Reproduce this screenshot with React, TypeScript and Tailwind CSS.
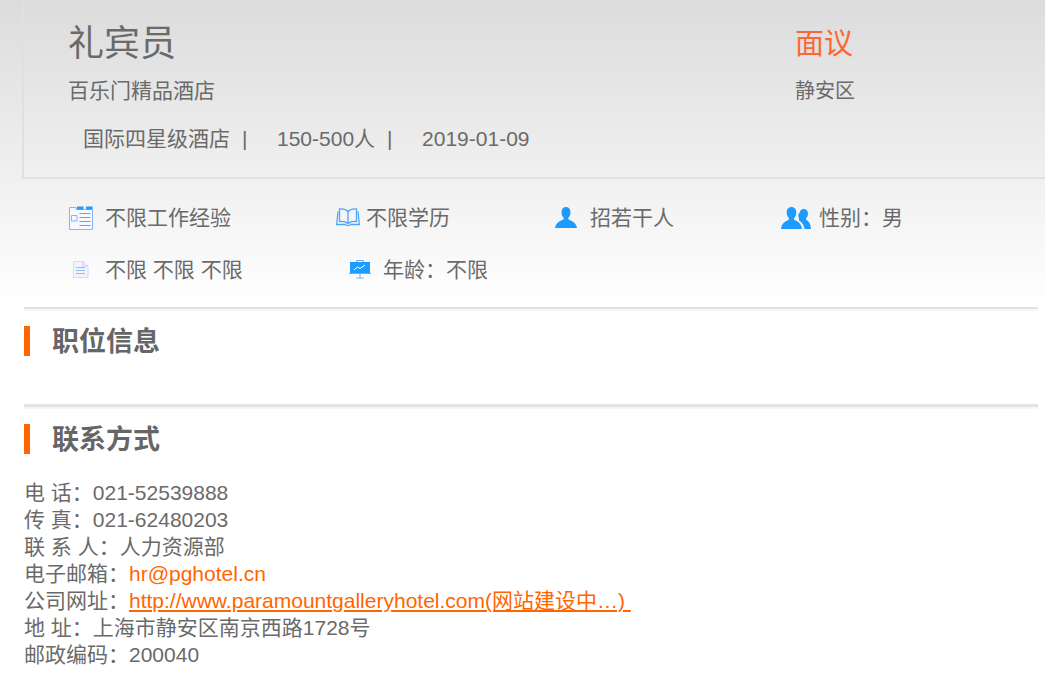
const font = "font-['Liberation_Sans','Noto_Sans_CJK_SC',sans-serif]";

const CalendarIcon = () => (
  <svg width="24" height="24" viewBox="0 0 24 24" fill="none">
    <path d="M.5 1.500H7v2h16.500v20H.5z" fill="#f6f9ff" stroke="#84b4ff" />
    <path d="M8 .5h6.500V3.500H8zM17 .5h6.500V3.500H17z" fill="#1e9bff" />
    <path d="M2.500 9.500h5.500v5.500H2.500z" stroke="#84b4ff" />
    <path d="M10.500 7.500h11M10.500 11.500h11M10.500 15.500h11M10.500 19.500h11" stroke="#5aa5f5" />
  </svg>
);

const BookIcon = () => (
  <svg width="24" height="19" viewBox="0 0 24 19" fill="none" stroke="#4ea5fb" strokeWidth="1.3">
    <path d="M12 3.500C10 1.500 7 .7 3.500 1v12.500c3.500-.3 6.500.2 8.500 2 2-1.800 5-2.300 8.500-2V1C17 .7 14 1.500 12 3.500zM12 3.500v12" />
    <path d="M2 3.500.7 16.500h8.800c.8 1.500 4.200 1.500 5 0h8.800L22 3.500" />
  </svg>
);

const PersonIcon = () => (
  <svg width="22" height="21" viewBox="0 0 22 21" fill="#1e9bff">
    <path d="M11 0c2.700 0 4.500 2.200 4.500 5.300 0 2.300-.9 4.400-2.100 5.500v1.500c.9 1 7.600 2 8.600 8.700H0c1-6.700 7.700-7.700 8.600-8.700v-1.500C7.400 9.700 6.500 7.600 6.500 5.300 6.500 2.200 8.300 0 11 0z" />
  </svg>
);

const PeopleIcon = () => (
  <svg width="30" height="22" viewBox="0 0 30 22" fill="#1e9bff">
    <path d="M18.500 6.500c0-3 2-4.500 4.300-4.500S27 3.700 27 6.500c0 2-.7 3.700-1.900 4.800v1.500c1 .8 4.400 1.800 4.900 9.200h-6.500c-.5-3.800-2.500-6.700-5.500-8.400V11.300c-.5-1-.9-3-.5-4.800z" />
    <path d="M10.500 0c2.900 0 4.800 2.300 4.800 5.500 0 2.300-1 4.500-2.200 5.600v1.500c1 1 7 2.300 7.900 9.400H0c.9-7.100 6.900-8.400 7.900-9.400v-1.500C6.700 10 5.700 7.800 5.700 5.500 5.700 2.300 7.600 0 10.500 0z" />
  </svg>
);

const DocIcon = () => (
  <svg width="16" height="17" viewBox="0 0 16 17" fill="none">
    <path d="M.5.5h9.500l5 4.500v11.500H.5z" fill="#f1f4ff" stroke="#d6dcff" />
    <path d="M10 .5V5h5" stroke="#c4d2fb" />
    <path d="M3 6.500h9M3 9.500h9M3 12.500h9" stroke="#8cc0f5" />
  </svg>
);

const BoardIcon = () => (
  <svg width="22" height="19" viewBox="0 0 22 19" fill="none">
    <path d="M7.500 2V.5h7V2" stroke="#62adf7" />
    <path d="M1 2h20v11H1z" fill="#1e9bff" />
    <path d="M0 13.500h22M11 14v3.500M7.500 18h7" stroke="#62adf7" />
    <path d="M5 10l3.500-3 2.500 1.500L16 5" stroke="#fff" />
  </svg>
);

const Meta = ({ icon, text, iconBox, width }: { icon: React.ReactNode; text: string; iconBox: string; width: string }) => (
  <div className={`flex items-center ${width}`}>
    <div className={`flex shrink-0 ${iconBox}`}>{icon}</div>
    <span>{text}</span>
  </div>
);

const SectionTitle = ({ children }: { children: string }) => (
  <div className="flex items-center h-[30px] border-l-[6px] border-[#ff6600] pl-[22px] pt-[2px] text-[27px] leading-[30px] font-bold text-[#666]">
    {children}
  </div>
);

const Divider = ({ thick }: { thick?: boolean }) => (
  <div className={`${thick ? "border-t-[3px]" : "border-t-2"} border-b-2 border-t-[#e2e2e2] border-b-[#f6f6f6]`} />
);

const App = () => {
  return (
    <div className={`${font} w-[1045px] h-[674px] overflow-hidden text-[21px] text-[#6a6a6a] bg-white`}>
      <div className="bg-gradient-to-b from-[#dcdcdc] to-white h-[307px] pl-6">
        <div className="h-[179px] border-l-2 border-b-2 border-[#e0e0e0] ml-[-2px] pl-[44px] pt-[18px]">
          <div className="flex">
            <div className="w-[727px]">
              <h1 className="text-[36px] leading-[50px] pt-px">礼宾员</h1>
              <p className="leading-[32px] mt-[6px]">百乐门精品酒店</p>
            </div>
            <div>
              <div className="text-[29px] leading-[50px] pt-px text-[#ff6633]">面议</div>
              <p className="text-[20px] leading-[32px] mt-[6px]">静安区</p>
            </div>
          </div>
          <div className="flex pl-[15px] mt-[16px] leading-[32px] whitespace-pre">
            <span>国际四星级酒店</span>
            <span className="w-[47px] pl-[12px]">|</span>
            <span>150-500人</span>
            <span className="w-[47px] pl-[12px]">|</span>
            <span>2019-01-09</span>
          </div>
        </div>
        <div className="pl-[45px] pt-[12px]">
          <div className="flex h-[53px]">
            <Meta icon={<CalendarIcon />} text="不限工作经验" iconBox="w-[36px]" width="w-[267px]" />
            <Meta icon={<BookIcon />} text="不限学历" iconBox="w-[30px]" width="w-[219px]" />
            <Meta icon={<PersonIcon />} text="招若干人" iconBox="w-[35px]" width="w-[226px]" />
            <Meta icon={<PeopleIcon />} text="性别：男" iconBox="w-[38px]" width="w-[200px]" />
          </div>
          <div className="flex h-[51px]">
            <Meta icon={<DocIcon />} text="不限 不限 不限" iconBox="w-[36px] pl-[4px]" width="w-[280px]" />
            <Meta icon={<BoardIcon />} text="年龄：不限" iconBox="w-[34px]" width="w-[300px]" />
          </div>
        </div>
      </div>

      <div className="pl-6 pr-[7px]">
        <Divider />
        <div className="pt-[15px] h-[93px]">
          <SectionTitle>职位信息</SectionTitle>
        </div>
        <Divider thick />
        <div className="pt-[15px]">
          <SectionTitle>联系方式</SectionTitle>
        </div>
        <div className="mt-[25px] leading-[27px] whitespace-pre">
          <p>电 话：021-52539888</p>
          <p>传 真：021-62480203</p>
          <p>联 系 人：人力资源部</p>
          <p>电子邮箱：<a className="text-[#ff6600]">hr@pghotel.cn</a></p>
          <p>公司网址：<a className="text-[#ff6600] underline">http://www.paramountgalleryhotel.com(网站建设中…) </a></p>
          <p>地 址：上海市静安区南京西路1728号</p>
          <p>邮政编码：200040</p>
        </div>
      </div>
    </div>
  );
};

export default App;
